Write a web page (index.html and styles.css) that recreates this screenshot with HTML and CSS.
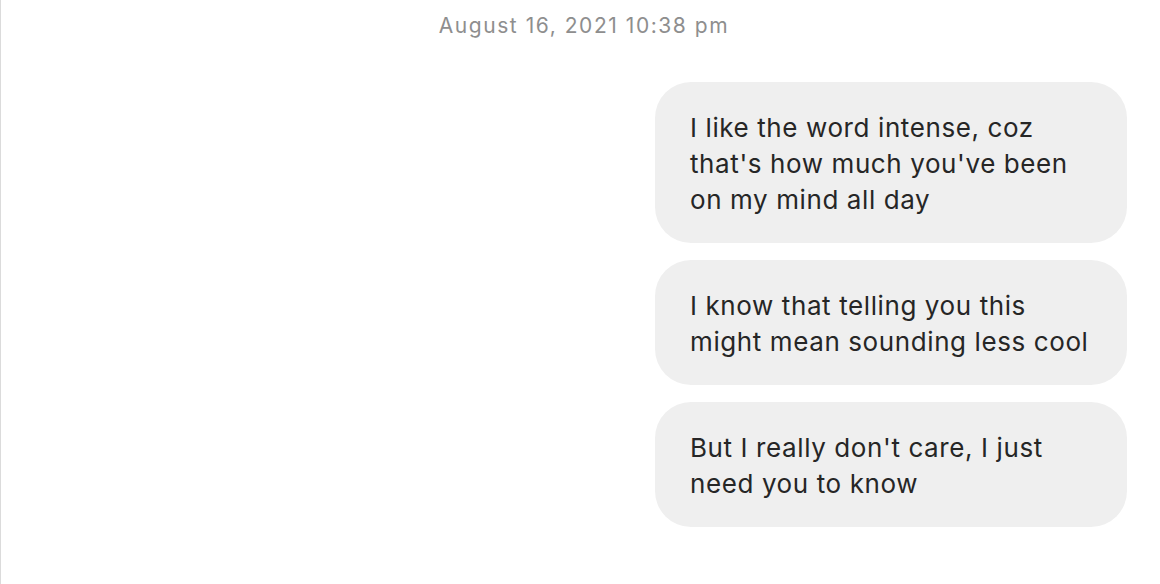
FILE: index.html
```html
<!DOCTYPE html>
<html>
<head>
<meta charset="utf-8">
<link rel="stylesheet" href="styles.css">
</head>
<body>
<div class="thread">
  <div class="stamp">August 16, 2021 10:38 pm</div>
  <div class="messages">
    <div class="bubble">I like the word intense, coz that's how much you've been on my mind all day</div>
    <div class="bubble">I know that telling you this might mean sounding less cool</div>
    <div class="bubble">But I really don't care, I just need you to know</div>
  </div>
</div>
</body>
</html>
```
FILE: styles.css
```css
html, body {
  margin: 0;
  padding: 0;
  background: #fff;
}
body {
  font-family: Inter, "Liberation Sans", sans-serif;
  height: 584px;
  overflow: hidden;
}
.thread {
  border-left: 1px solid #dbdbdb;
  height: 584px;
  box-sizing: border-box;
  padding: 12px 33px 0 0;
}
.stamp {
  text-align: center;
  font-size: 21px;
  line-height: 28px;
  letter-spacing: 1.55px;
  color: #8e8e8e;
  padding-left: 40px;
}
.messages {
  display: flex;
  flex-direction: column;
  align-items: flex-end;
  gap: 17px;
  margin-top: 42px;
}
.bubble {
  width: 472px;
  box-sizing: border-box;
  background: #efefef;
  border-radius: 36px;
  padding: 28px 34px 25px 35px;
  font-size: 26px;
  line-height: 36px;
  letter-spacing: 0.6px;
  color: #262626;
}
```
